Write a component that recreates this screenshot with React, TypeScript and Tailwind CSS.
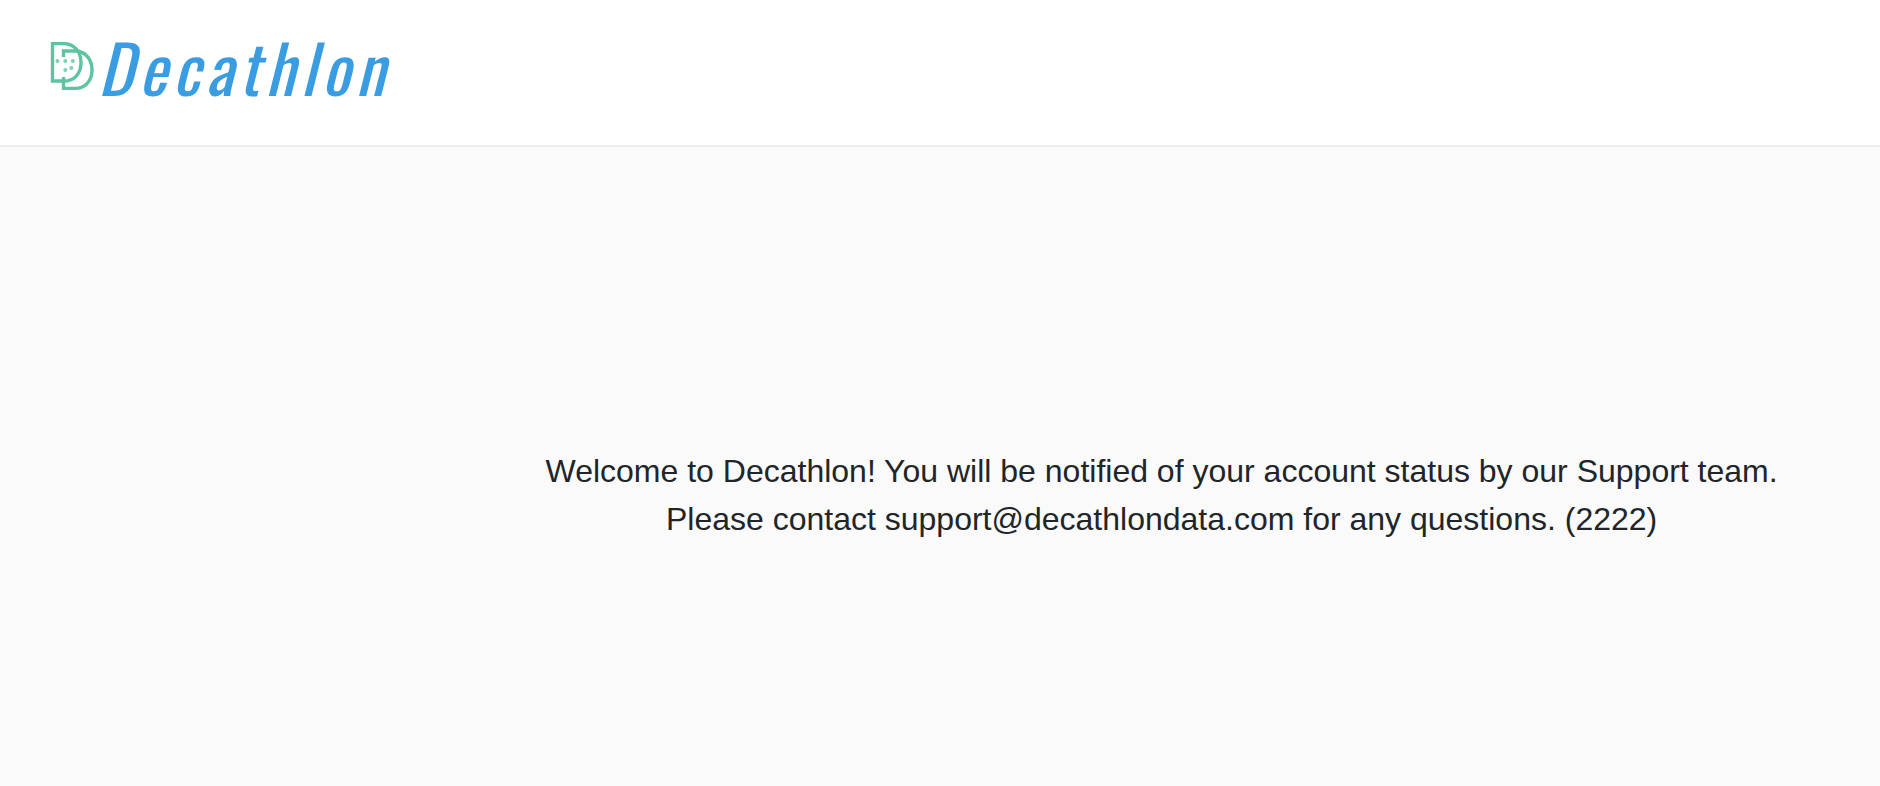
import React from 'react';

function LogoMark() {
  return (
    <svg
      className="h-12 w-11 shrink-0"
      viewBox="0 0 44 48"
      fill="none"
      stroke="#5cc5a0"
      strokeWidth="3.4"
      aria-hidden="true"
    >
      <path d="M2.5 1.6H13C24 1.6 31 9.5 31 20.5C31 32 24 39 14 39H2.5Z" />
      <path d="M13.5 15V9H25C35 9 42 17 42 28C42 39 35 46.4 25 46.4H13.5V35" />
      <g fill="#7dd1b3" stroke="none">
        <circle cx="7.5" cy="19" r="2" />
        <circle cx="15.3" cy="19" r="2" />
        <circle cx="22.8" cy="19" r="2" />
        <circle cx="21.3" cy="26" r="2" />
        <circle cx="15.3" cy="28" r="2" />
      </g>
    </svg>
  );
}

function Header() {
  return (
    <header className="border-b-2 border-[#ededed] bg-white px-[50px] pt-[18px] pb-[31px]">
      <a href="/" className="flex w-fit items-center gap-1">
        <LogoMark />
        <span className="font-['Oswald','Roboto_Condensed',sans-serif] text-[66px] leading-[96px] font-normal tracking-[6px] text-[#3a9de2] italic">
          Decathlon
        </span>
      </a>
    </header>
  );
}

export default function App() {
  return (
    <div className="flex min-h-screen flex-col bg-[#fafafa] font-['Liberation_Sans',Arial,sans-serif] text-[#212529]">
      <Header />
      <main className="flex-1 pt-[300px] pr-2 pl-[24%]">
        {/* Account status message */}
        <p className="text-center text-[32px] leading-[48px]">
          Welcome to Decathlon! You will be notified of your account status by our Support team.
          <br />
          Please contact support@decathlondata.com for any questions. (2222)
        </p>
      </main>
    </div>
  );
}
